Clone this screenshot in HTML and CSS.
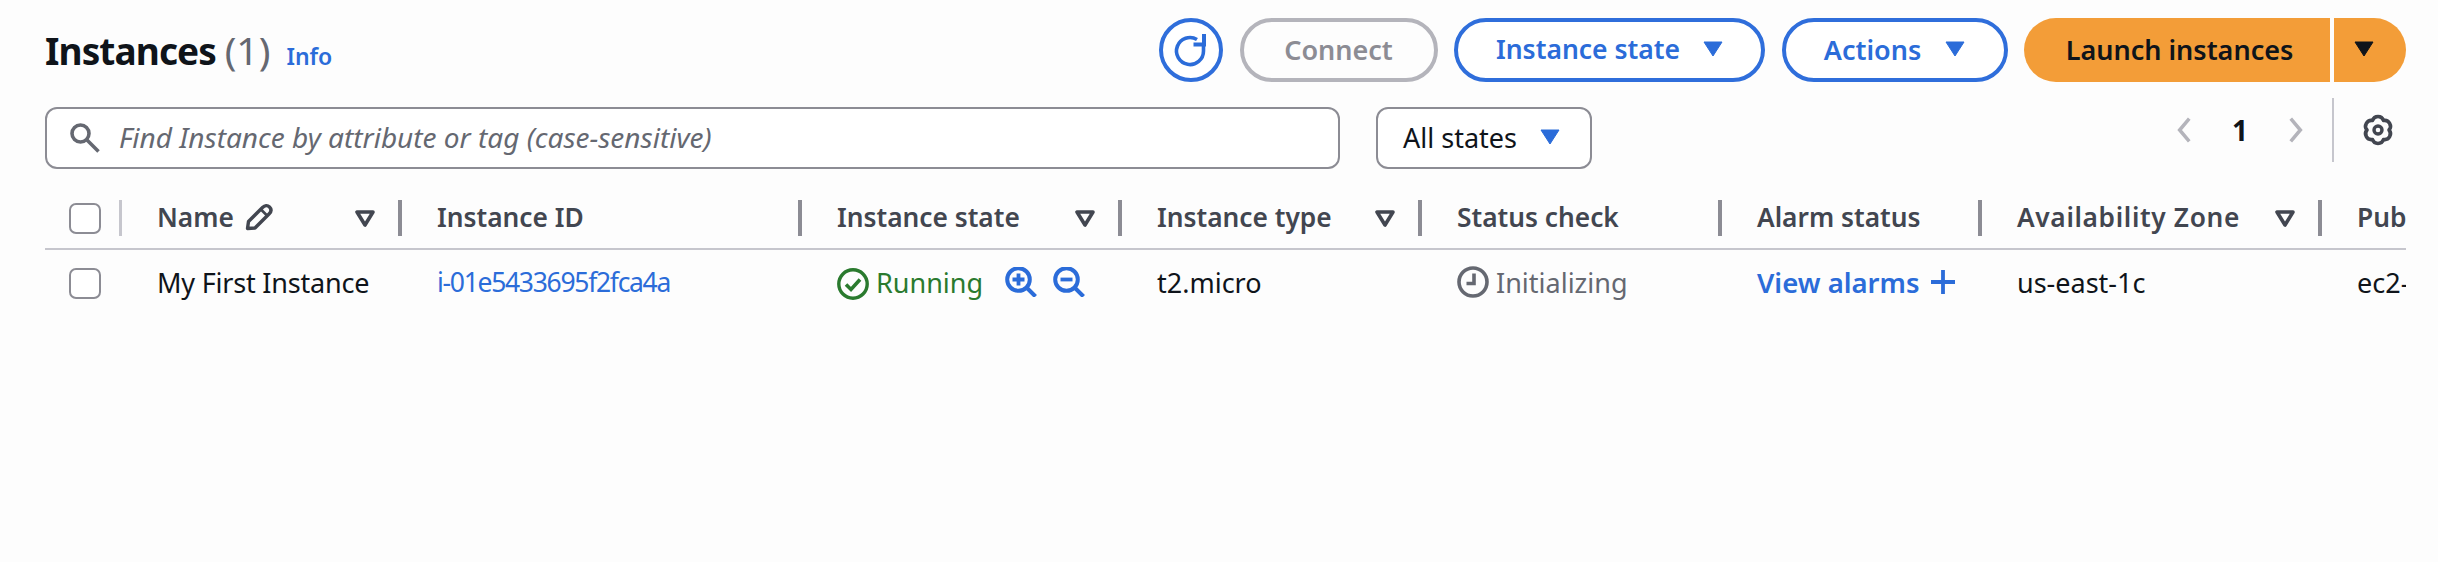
FILE: index.html
```html
<!DOCTYPE html>
<html lang="en">
<head>
<meta charset="utf-8">
<title>Instances</title>
<link rel="stylesheet" href="styles.css">
</head>
<body>
<main class="page">
  <header class="top">
    <div class="title">
      <h1>Instances <span class="count">(1)</span></h1>
      <a class="info">Info</a>
    </div>
    <div class="actions">
      <button class="btn icon-btn" aria-label="Refresh">
        <svg viewBox="0 0 36 36" class="refresh"><path d="M24 7.500A13.500 13.500 0 1 0 30.500 19V12" fill="none" stroke="currentColor" stroke-width="3.600"/><path d="M31 2v10.500H20.500" fill="none" stroke="currentColor" stroke-width="4"/></svg>
      </button>
      <button class="btn disabled connect">Connect</button>
      <button class="btn state-btn">Instance state<svg class="caret" viewBox="0 0 20 16"><path d="M1 1h18L10 15z" fill="currentColor" stroke="currentColor" stroke-linejoin="round"/></svg></button>
      <button class="btn actions-btn">Actions<svg class="caret" viewBox="0 0 20 16"><path d="M1 1h18L10 15z" fill="currentColor" stroke="currentColor" stroke-linejoin="round"/></svg></button>
      <div class="launch">
        <button class="launch-main">Launch instances</button>
        <button class="launch-drop" aria-label="More"><svg class="caret" viewBox="0 0 20 16"><path d="M1 1h18L10 15z" fill="currentColor" stroke="currentColor" stroke-linejoin="round"/></svg></button>
      </div>
    </div>
  </header>

  <section class="filters">
    <div class="search">
      <svg class="search-icon" viewBox="0 0 30 30"><circle cx="10.500" cy="10.500" r="8.500" fill="none" stroke="currentColor" stroke-width="3.600"/><path d="M17 17l11.500 11.500" stroke="currentColor" stroke-width="3.600" fill="none"/></svg>
      <span class="placeholder">Find Instance by attribute or tag (case-sensitive)</span>
    </div>
    <div class="select">All states<svg class="caret" viewBox="0 0 20 16"><path d="M1 1h18L10 15z" fill="currentColor" stroke="currentColor" stroke-linejoin="round"/></svg></div>
    <nav class="pager">
      <svg class="chev" viewBox="0 0 18 32"><path d="M15 3L4 16l11 13" fill="none" stroke="currentColor" stroke-width="4"/></svg>
      <span class="page-no">1</span>
      <svg class="chev" viewBox="0 0 18 32"><path d="M3 3l11 13L3 29" fill="none" stroke="currentColor" stroke-width="4"/></svg>
      <span class="pager-div"></span>
      <svg class="gear" viewBox="0 0 32 32"><path d="M10.500 6.500A5.800 5.800 0 0 1 21.500 6.500A5.800 5.800 0 0 1 27 16A5.800 5.800 0 0 1 21.500 25.500A5.800 5.800 0 0 1 10.500 25.500A5.800 5.800 0 0 1 5 16A5.800 5.800 0 0 1 10.500 6.500z" fill="none" stroke="currentColor" stroke-width="3.600" stroke-linejoin="round"/><circle cx="16" cy="16" r="4" fill="none" stroke="currentColor" stroke-width="3.400"/></svg>
    </nav>
  </section>

  <section class="table">
    <div class="row head">
      <div class="cell sel"><span class="check"></span><span class="div light"></span></div>
      <div class="cell"><span class="label name-label">Name<svg class="pencil" viewBox="0 0 28 28"><path d="M2.500 25.500L3.500 18.500L17.500 4.500C19.800 2.200 22.500 2 24.500 4C26.500 6 26.300 8.700 24 11L10 25z" fill="none" stroke="currentColor" stroke-width="3.400" stroke-linejoin="round"/><path d="M16 6.500l6 6" stroke="currentColor" stroke-width="2.600"/></svg></span><svg class="filter" viewBox="0 0 20 17"><path d="M2 2h16l-8 13z" fill="none" stroke="currentColor" stroke-width="3.600" stroke-linejoin="round"/></svg><span class="div"></span></div>
      <div class="cell"><span class="label">Instance ID</span><span class="div"></span></div>
      <div class="cell"><span class="label">Instance state</span><svg class="filter" viewBox="0 0 20 17"><path d="M2 2h16l-8 13z" fill="none" stroke="currentColor" stroke-width="3.600" stroke-linejoin="round"/></svg><span class="div"></span></div>
      <div class="cell"><span class="label">Instance type</span><svg class="filter" viewBox="0 0 20 17"><path d="M2 2h16l-8 13z" fill="none" stroke="currentColor" stroke-width="3.600" stroke-linejoin="round"/></svg><span class="div"></span></div>
      <div class="cell"><span class="label">Status check</span><span class="div"></span></div>
      <div class="cell"><span class="label">Alarm status</span><span class="div"></span></div>
      <div class="cell"><span class="label az">Availability Zone</span><svg class="filter" viewBox="0 0 20 17"><path d="M2 2h16l-8 13z" fill="none" stroke="currentColor" stroke-width="3.600" stroke-linejoin="round"/></svg><span class="div"></span></div>
      <div class="cell clip"><span class="label">Public IPv4 DNS</span></div>
    </div>
    <div class="row body">
      <div class="cell sel"><span class="check"></span></div>
      <div class="cell tight">My First Instance</div>
      <div class="cell"><a class="link iid">i-01e5433695f2fca4a</a></div>
      <div class="cell state">
        <svg class="ok" viewBox="0 0 32 32"><circle cx="16" cy="16" r="14.200" fill="none" stroke="currentColor" stroke-width="3.400"/><path d="M9 16.500l5 5 9-10" fill="none" stroke="currentColor" stroke-width="3.600"/></svg>
        <span class="running">Running</span>
        <svg class="zoom z1" viewBox="0 0 33 30"><circle cx="13.500" cy="12.500" r="11.300" fill="none" stroke="currentColor" stroke-width="4"/><path d="M21.500 20.500l9 9" stroke="currentColor" stroke-width="4"/><path d="M7.500 12.500h12M13.500 6.500v12" stroke="currentColor" stroke-width="3.800"/></svg>
        <svg class="zoom" viewBox="0 0 33 30"><circle cx="13.500" cy="12.500" r="11.300" fill="none" stroke="currentColor" stroke-width="4"/><path d="M21.500 20.500l9 9" stroke="currentColor" stroke-width="4"/><path d="M7.500 12.500h12" stroke="currentColor" stroke-width="3.800"/></svg>
      </div>
      <div class="cell">t2.micro</div>
      <div class="cell status">
        <svg class="clock" viewBox="0 0 32 32"><circle cx="16" cy="16" r="14" fill="none" stroke="currentColor" stroke-width="3.600"/><path d="M17 7.500v10H9.500" fill="none" stroke="currentColor" stroke-width="3.600"/></svg>
        <span>Initializing</span>
      </div>
      <div class="cell"><a class="link alarm">View alarms<svg class="plus" viewBox="0 0 24 24"><path d="M12 0v24M0 12h24" stroke="currentColor" stroke-width="3.800"/></svg></a></div>
      <div class="cell">us-east-1c</div>
      <div class="cell clip">ec2-3-91-20-14.compute-1.amazonaws.com</div>
    </div>
  </section>
</main>
</body>
</html>
```
FILE: styles.css
```css
* { box-sizing: border-box; }
html, body { margin: 0; height: 100%; }
body {
  background: #fdfdfd;
  color: #0f141a;
  font-family: "Noto Sans", "Liberation Sans", sans-serif;
  font-size: 27px;
  overflow: hidden;
}
.page { padding: 18px 32px 0 45px; }

.top { display: flex; justify-content: space-between; align-items: center; height: 64px; }
.title { display: flex; align-items: baseline; gap: 16px; }
h1 { margin: 0; font-size: 37px; font-weight: 700; letter-spacing: -0.9px; line-height: 44px; }
.count { color: #656871; font-weight: 400; font-size: 39px; letter-spacing: 0; }
.info { color: #2b6cd9; font-size: 23px; font-weight: 600; }

.actions { display: flex; align-items: center; gap: 16.5px; }
.btn {
  height: 64px;
  border: 4px solid #2f6edb;
  border-radius: 32px;
  background: #fff;
  color: #2b6cd9;
  font: 600 27px "Noto Sans", sans-serif;
  display: flex;
  align-items: center;
  justify-content: center;
  padding: 0 0 2px;
}
.icon-btn { width: 64px; padding: 0; }
.refresh { width: 36px; height: 36px; flex: none; }
.disabled { border-color: #b4b4bb; color: #8c8c94; background: #fdfdfd; }
.connect { width: 198px; }
.state-btn { width: 311px; gap: 23px; font-size: 26.5px; }
.actions-btn { width: 226px; gap: 24px; }
.caret { width: 20px; height: 16px; flex: none; }
.launch { display: flex; height: 64px; gap: 4px; }
.launch button { border: 0; background: #f39d38; color: #0f141a; font: 600 27px "Noto Sans", sans-serif; height: 64px; }
.launch-main { width: 306px; border-radius: 32px 0 0 32px; padding: 0 0 2px 5px; }
.launch-drop { width: 72px; border-radius: 0 32px 32px 0; display: flex; align-items: center; justify-content: center; padding: 0 12px 2px 0; }

.filters { display: flex; align-items: flex-start; margin-top: 25px; height: 62px; }
.search {
  width: 1295px;
  height: 62px;
  border: 2px solid #8c8c94;
  border-radius: 12px;
  background: #fff;
  display: flex;
  align-items: center;
  padding-left: 23px;
  gap: 19px;
}
.search-icon { width: 30px; height: 30px; color: #656871; flex: none; }
.placeholder { color: #656871; font-style: italic; font-size: 28px; padding-bottom: 2px; }
.select {
  margin-left: 36px;
  width: 216px;
  height: 62px;
  border: 2px solid #8c8c94;
  border-radius: 12px;
  background: #fff;
  display: flex;
  align-items: center;
  padding: 0 0 2px 25px;
  gap: 23px;
  color: #0f141a;
}
.select .caret { color: #2b6cd9; }
.pager { margin-left: auto; margin-top: -9px; height: 64px; display: flex; align-items: center; padding-right: 12px; }
.chev { width: 18px; height: 28px; color: #b4b4bb; flex: none; }
.page-no { font-weight: 700; font-size: 28px; width: 38px; margin: 0 28px; text-align: center; }
.pager-div { width: 2px; height: 64px; background: #c6c6cd; margin: 0 28px 0 27px; }
.gear { width: 32px; height: 32px; color: #424650; flex: none; }

.table { margin-top: 31px; width: 2361px; overflow: hidden; }
.row { display: grid; grid-template-columns: 77px 280px 400px 320px 300px 300px 260px 340px 84px; }
.cell { position: relative; display: flex; align-items: center; padding-left: 35px; white-space: nowrap; min-width: 0; }
.head { height: 50px; border-bottom: 2px solid #c6c6cd; }
.head .cell { height: 36px; padding-bottom: 3px; color: #424650; font-weight: 600; font-size: 26.3px; }
.body { height: 66px; align-items: center; }
.body .cell { padding-bottom: 2px; }
.body .sel { padding-bottom: 0; }
.tight { letter-spacing: -0.2px; }
.sel { padding-left: 24px; }
.head .sel { padding-bottom: 0; }
.check { width: 32px; height: 31px; border: 2px solid #8c8c94; border-radius: 7px; background: #fff; display: block; }
.div { position: absolute; right: 0; top: 0; width: 4px; height: 36px; background: #8c8c94; }
.div.light { background: #c6c6cd; width: 3px; }
.label { display: inline-flex; align-items: center; gap: 11px; }
.az { letter-spacing: 0.65px; }
.pencil { width: 28px; height: 28px; flex: none; }
.filter { position: absolute; right: 27px; top: 10px; width: 20px; height: 17px; }
.clip { overflow: hidden; }
.link { color: #2b6cd9; }
.iid { font-size: 26.5px; letter-spacing: -1.3px; }
.state { color: #2a7a2e; }
.ok { width: 32px; height: 32px; flex: none; margin: 4px 7px 0 0; }
.running { margin-right: 22px; }
.zoom { width: 33px; height: 30px; color: #2b6cd9; flex: none; margin-top: -1px; }
.z1 { margin-right: 15px; }
.status { color: #656871; }
.clock { width: 32px; height: 32px; flex: none; margin-right: 7px; }
.alarm { font-weight: 600; font-size: 27.5px; display: inline-flex; align-items: center; gap: 11px; }
.plus { width: 24px; height: 24px; flex: none; }
```
